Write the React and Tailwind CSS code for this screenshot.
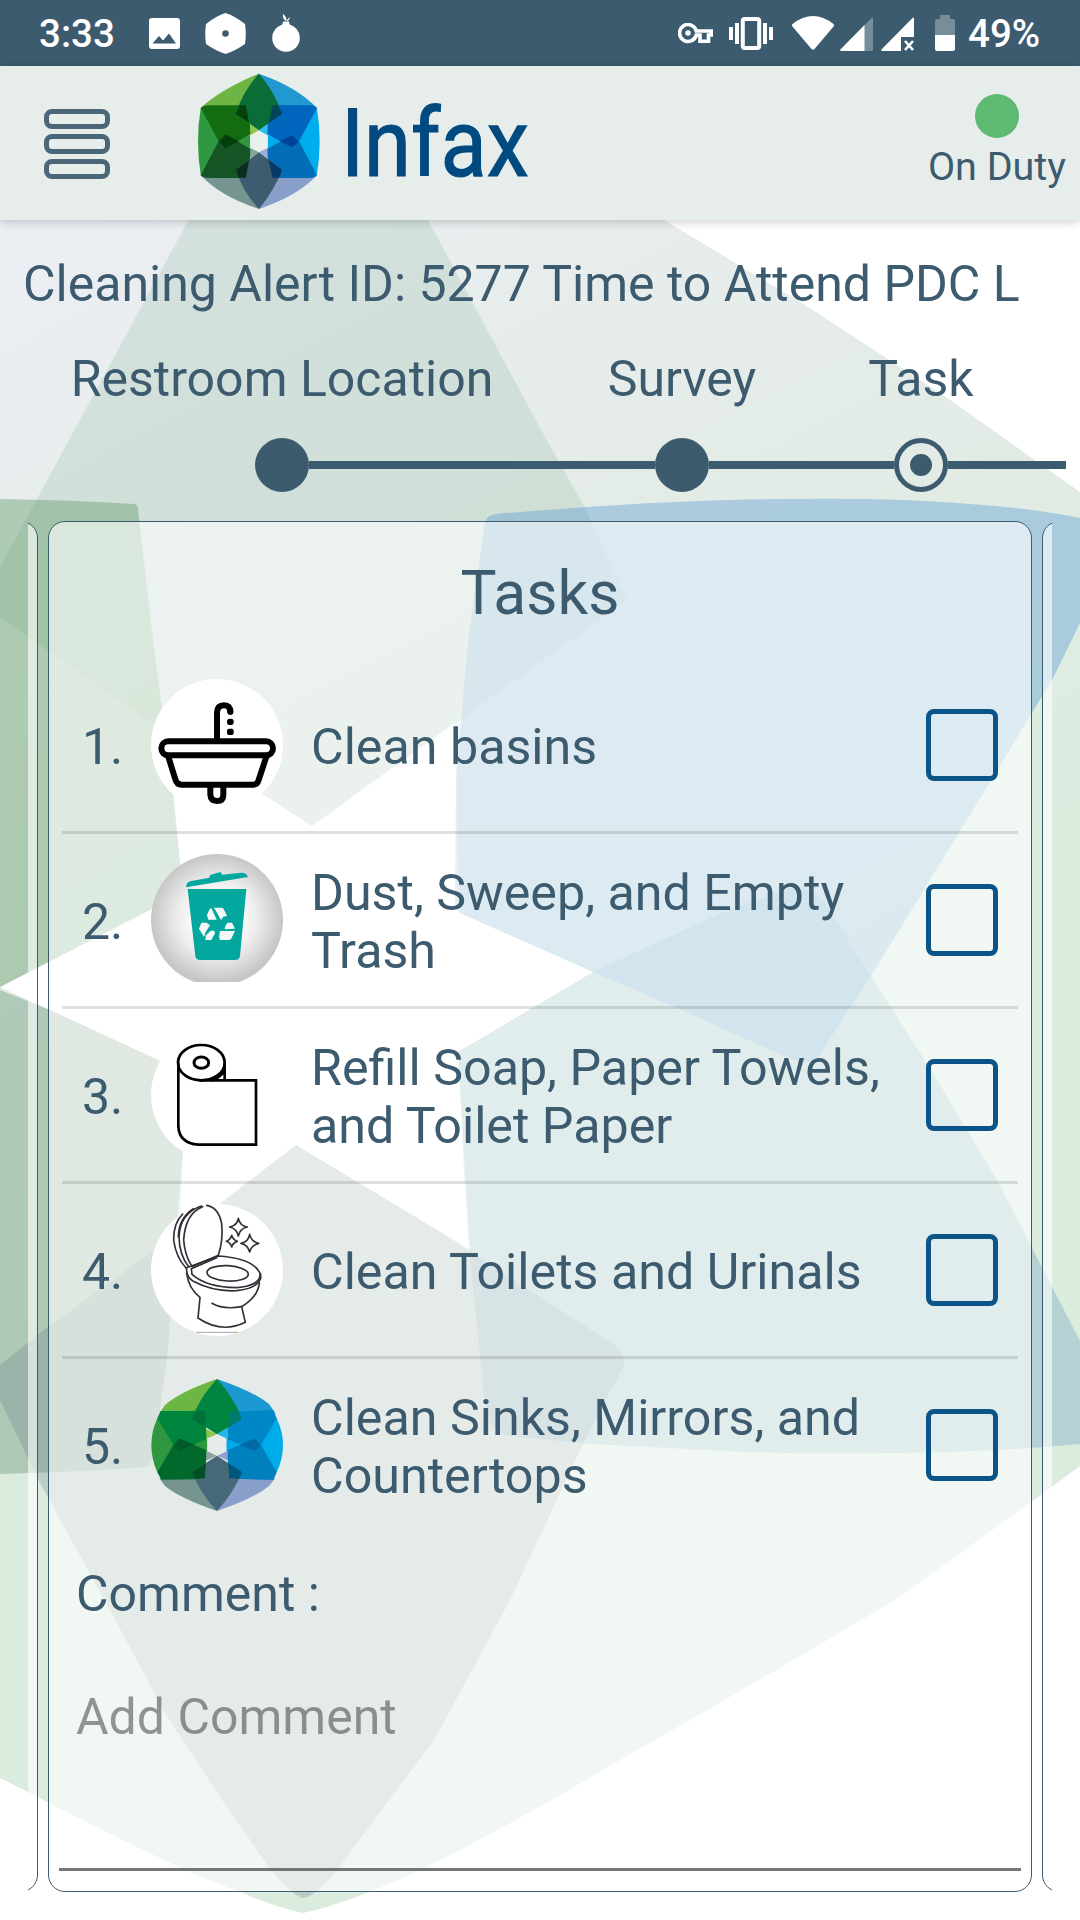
const tasks = [
  { label: ['Clean basins'], Icon: BasinIcon },
  { label: ['Dust, Sweep, and Empty', 'Trash'], Icon: TrashIcon },
  { label: ['Refill Soap, Paper Towels,', 'and Toilet Paper'], Icon: RollIcon },
  { label: ['Clean Toilets and Urinals'], Icon: ToiletIcon },
  { label: ['Clean Sinks, Mirrors, and', 'Countertops'], Icon: HexIcon },
];

function Backdrop() {
  return (
    <svg className="absolute inset-0 -z-10 h-[1920px] w-[1080px]" viewBox="0 0 1080 1920" aria-hidden="true">
      <defs>
        <linearGradient id="haze" gradientUnits="userSpaceOnUse" x1="100" y1="220" x2="560" y2="1100">
          <stop offset="0" stopColor="#ebeef3" />
          <stop offset="0.2" stopColor="#e8edee" />
          <stop offset="0.6" stopColor="#e2ebe5" />
          <stop offset="1" stopColor="#dbecdf" />
        </linearGradient>
      </defs>
      <rect width="1080" height="1920" fill="#fff" />
      <path
        fill="url(#haze)"
        d="M0 210H646L664 220L802 303L946 397L1080 492V1466Q1000 1525 895 1600Q740 1692 620 1760Q520 1820 427 1867Q350 1903 303 1913Q270 1906 241 1892Q200 1878 179 1867Q90 1825 28 1792L0 1778Z"
      />
      <path fill="#fff" d="M0 987L183 893L168 733L312 826L455 722L460 913L593 972L458 1052L470 1249L296 1145L180 1236L185 1072Z" />
      <path fill="#589773" fillOpacity="0.15" d="M194 210H422L428 220L540 428L585 508L627 600L312 826L152 723L0 617V567Z" />
      <path fill="#5a985f" fillOpacity="0.4" d="M0 499Q70 500 134 504Q137 504 138 509L153 640L173 793L183 893L0 987Z" />
      <path fill="#699676" fillOpacity="0.4" d="M0 990L50 1010L158 1060L183 1072L183 1153L178 1210L168 1350L158 1425Q155 1462 147 1467Q80 1472 0 1474Z" />
      <path fill="#69a2bb" fillOpacity="0.34" d="M458 1052L593 972L726 911L790 888Q812 884 828 908L871 976L933 1073L997 1180L1080 1341V1444Q980 1453 889 1453Q820 1454 746 1452L591 1444L510 1436Q493 1434 490 1420L485 1403L469 1248L464 1170Z" />
      <path fill="#5597d2" fillOpacity="0.39" d="M496 514Q640 502 730 500Q880 496 970 504Q1030 508 1080 518V623L1052 680L998 769L871 976L820 1054Q812 1066 797 1061L779 1054L675 1007L593 972L460 913Q455 910 455 900L456 780L468 640L485 522Q487 515 496 514Z" />
      <path fill="#697f8c" fillOpacity="0.28" d="M0 1365L40 1333L150 1253L220 1203L296 1145L440 1232L534 1293L610 1342Q627 1352 624 1366Q600 1410 580 1450L510 1600L434 1740L337 1870Q314 1898 303 1898Q292 1896 269 1867L220 1797L165 1713L110 1610L40 1483L0 1400Z" />
    </svg>
  );
}

function BasinIcon() {
  return (
    <svg className="size-[132px]" viewBox="333 57 396 396" fill="none" stroke="#000" strokeWidth="18">
      <circle cx="531" cy="255" r="198" fill="#fff" stroke="none" />
      <rect x="364" y="244" width="335" height="42" rx="21" />
      <path d="M385 290L406 358Q410 374 425 374H640Q652 374 656 360L679 290" />
      <path d="M531 240V158Q532 136 552 136Q571 136 571 158" />
      <path d="M571 150V156" strokeLinecap="round" />
      <path d="M511 380V404Q512 423 531 423Q550 423 550 404V380" />
      <rect x="561" y="176" width="20" height="19" rx="8" fill="#000" stroke="none" />
      <rect x="561" y="206" width="20" height="19" rx="6" fill="#000" stroke="none" />
    </svg>
  );
}

function TrashIcon() {
  return (
    <svg className="size-[132px]" viewBox="333 582 396 396">
      <defs>
        <radialGradient id="disc">
          <stop offset="0.3" stopColor="#fff" />
          <stop offset="0.6" stopColor="#ededed" />
          <stop offset="1" stopColor="#c6c6c6" />
        </radialGradient>
      </defs>
      <path d="M463 966A198 198 0 1 1 599 966Z" fill="url(#disc)" />
      <g fill="#04a79d">
        <path d="M443 687H619L600 888Q598 900 586 900H480Q468 900 466 888Z" />
        <path d="M438 682Q438 666 454 663L508 653L510 645L542 636L546 644L604 638Q620 638 624 651Z" />
      </g>
      <g fill="#f4f8f6">
        <path d="M514 744L530 779H505L501 765L509 747Z" />
        <path d="M521 743H548L554 753L561 768L550 770L543 780L526 749Z" />
        <path d="M484 788H500L510 796L497 816L492 831L477 806Z" />
        <path d="M512 812H523L525 820L514 840H496L498 826Z" />
        <path d="M562 788H576L585 806L554 808L555 800Z" />
        <path d="M540 813H585L573 838L566 840H540L537 830Z" />
      </g>
    </svg>
  );
}

function RollIcon() {
  return (
    <svg className="size-[132px]" viewBox="333 57 396 396" fill="none" stroke="#000" strokeWidth="8">
      <circle cx="531" cy="255" r="198" fill="#fff" stroke="none" />
      <ellipse cx="484" cy="158" rx="70" ry="53" />
      <ellipse cx="484" cy="158" rx="22" ry="17" strokeWidth="9" />
      <path d="M415 158V350Q418 400 475 404H648V211H478" />
      <path d="M554 158V211M554 180Q540 206 510 211" />
    </svg>
  );
}

function ToiletIcon() {
  return (
    <svg className="size-[132px]" viewBox="333 582 396 396" fill="none" stroke="#322f38" strokeWidth="5" strokeLinecap="round" strokeLinejoin="round">
      <circle cx="531" cy="780" r="198" fill="#fff" stroke="none" />
      <path d="M500 586Q535 592 545 640Q550 690 535 736L456 770Q434 735 431 690Q436 610 488 590" />
      <path d="M484 588Q420 610 417 680Q418 735 446 770" />
      <path d="M460 596Q416 625 415 680" />
      <path d="M428 612Q400 640 401 690Q407 740 438 774" />
      <path d="M438 774L535 738Q640 745 660 790Q664 826 590 833Q500 832 456 793L454 776L530 743" />
      <path d="M440 778Q438 800 460 814Q520 846 590 842Q650 836 662 805V792" />
      <ellipse cx="563" cy="790" rx="62" ry="23" transform="rotate(3 563 790)" />
      <path d="M440 790Q446 836 480 862L474 924Q545 972 616 937L605 890Q655 860 658 818" />
      <path d="M516 880Q550 900 605 890" />
      <path d="M595 625Q600 648 622 651Q600 656 595 678Q590 656 569 651Q592 646 595 625Z" />
      <path d="M629 673Q634 695 656 700Q634 706 629 726Q624 705 603 700Q625 696 629 673Z" />
      <path d="M575 676Q579 690 592 694Q579 698 575 711Q571 698 559 694Q571 690 575 676Z" />
      <path d="M470 967H586" stroke="#aaa6ab" strokeWidth="3" />
      <path d="M587 967H593" stroke="#b7bd3c" strokeWidth="3" />
    </svg>
  );
}

function HexIcon() {
  return (
    <svg className="size-[132px]" viewBox="333 87 396 396">
      <path fill="#6cb644" d="M531 87Q420 125 375 165L358 190H520Z" />
      <path fill="#1b99d0" d="M531 87Q642 125 687 162L706 190H542Z" />
      <path fill="#769490" d="M531 483Q420 445 375 408L358 385H520Z" />
      <path fill="#889fca" d="M531 483Q642 445 687 408L706 385H542Z" />
      <path fill="#2f973f" d="M352 205Q316 285 352 367L440 345L502 303V266L440 225Z" />
      <path fill="#00abea" d="M710 205Q748 285 710 367L622 345L559 303V266L622 225Z" />
      <path fill="#8bc549" d="M497 236L531 253L497 268Z" />
      <path fill="#25b7ee" d="M565 232L531 253L562 266Z" />
      <path fill="#8aa49c" d="M499 302L531 317L497 332Z" />
      <path fill="#8fa1d4" d="M563 302L531 317L565 332Z" />
      <path fill="#00853f" d="M352 205L362 183Q430 183 494 182Q499 230 499 268L417 303L400 285Z" />
      <path fill="#0087c6" d="M710 205L700 180Q630 183 568 186Q562 230 563 268L645 303L663 285Z" />
      <path fill="#006a2d" d="M352 367L364 389Q430 389 494 387Q499 345 499 301L417 265L400 285Z" />
      <path fill="#0080bd" d="M710 367L700 390Q630 389 568 384Q562 345 563 301L645 265L663 285Z" />
      <path fill="#005a2b" d="M417 265L463 284L417 303L402 288Z" />
      <path fill="#006aa5" d="M645 265L600 284L645 303L661 287Z" />
      <path fill="#008540" d="M531 87Q580 140 606 206L531 253L456 206Q480 140 531 87Z" />
      <path fill="#476879" d="M531 483Q580 430 606 366L531 317L456 366Q480 430 531 483Z" />
      <path fill="#006f3b" d="M467 182L494 184L497 232L456 206Z" />
      <path fill="#007a6d" d="M595 182L568 186L565 232L606 206Z" />
      <path fill="#004f24" d="M464 387L494 385L498 340L456 366Z" />
      <path fill="#00567d" d="M598 387L568 384L564 340L606 366Z" />
      <path fill="#e6ebec" d="M531 253L559 266V303L531 317L502 303V266Z" />
    </svg>
  );
}

function BrandMark() {
  return (
    <svg className="h-[136px] w-[122px]" viewBox="575 220 355 408" preserveAspectRatio="none">
      <path fill="#6db645" d="M752 222Q640 270 583 325L600 335H725Z" />
      <path fill="#2199d0" d="M752 222Q864 262 921 325L905 335H780Z" />
      <path fill="#769490" d="M752 628Q640 590 583 527L600 520H725Z" />
      <path fill="#889fca" d="M752 628Q864 590 921 527L905 520H780Z" />
      <path fill="#2f9941" d="M583 325Q567 425 583 527L660 490L727 444V408L660 365Z" />
      <path fill="#00adec" d="M921 325Q937 425 921 527L845 490L778 444V408L845 365Z" />
      <path fill="#8cc84b" d="M722 370L752 392L724 409Z" />
      <path fill="#2cbcf2" d="M782 370L752 392L780 409Z" />
      <path fill="#83a397" d="M724 443L752 458L722 480Z" />
      <path fill="#a0ace0" d="M780 443L752 458L782 480Z" />
      <path fill="#136c10" d="M583 325Q590 317 605 317H714Q727 350 727 404L655 446L635 425Z" />
      <path fill="#0065bd" d="M921 325Q915 317 900 317H790Q777 350 777 404L850 444L869 425Z" />
      <path fill="#155424" d="M583 527Q590 535 605 535H714Q727 500 727 447L655 404L635 425Z" />
      <path fill="#006db6" d="M921 527Q915 535 900 535H790Q777 500 777 447L850 406L869 425Z" />
      <path fill="#05400a" d="M655 404L694 425L655 446L637 427Z" />
      <path fill="#00419a" d="M850 407L812 425L850 443L867 426Z" />
      <path fill="#0a6d38" d="M752 222Q795 270 820 342L752 392L685 342Q705 275 752 222Z" />
      <path fill="#3e5b70" d="M752 628Q795 575 820 510L752 458L685 510Q705 575 752 628Z" />
      <path fill="#04400c" d="M696 317H714L723 368L685 342Z" />
      <path fill="#03465c" d="M808 317H792L781 370L820 342Z" />
      <path fill="#09301c" d="M693 534H714L724 481L685 510Z" />
      <path fill="#073a68" d="M811 534H792L780 481L820 510Z" />
      <path fill="#e9f0ee" d="M752 393L778 408V444L752 457L727 444V408Z" />
    </svg>
  );
}

function StatusBar() {
  return (
    <div className="flex h-[66px] items-center bg-[#3d5b6f] text-[38.5px] leading-[45px] font-medium text-white">
      <span className="ml-[39px] w-[110px] pt-px">3:33</span>
      <svg className="h-[31px] w-[31px]" viewBox="0 0 31 31">
        <rect width="31" height="31" rx="3" fill="#fff" />
        <path d="M3.500 25.500L10 18L14 22.500L20 15.500L27 25.500Z" fill="#3d5b6f" />
      </svg>
      <svg className="ml-[25px] h-[41px] w-[41px]" viewBox="0 0 41 41">
        <path d="M20.500 0Q30 3 40 11Q41.500 20 40 31Q30 38 20.500 41Q11 38 1 31Q-0.500 20 1 11Q11 3 20.500 0Z" fill="#fff" />
        <circle cx="20.500" cy="20.500" r="3.300" fill="#3d5b6f" />
      </svg>
      <svg className="ml-[26px] h-[38px] w-[28px]" viewBox="0 0 28 38" fill="#fff">
        <ellipse cx="14" cy="24" rx="13.800" ry="13.800" />
        <path d="M9 12Q11 10 11 7.500H17Q17 10 19 12Z" />
        <path d="M11 0Q15 3 14.500 7L12.500 6Q10 3 11 0ZM18 3Q17 7 14.500 7.500Q15 5 18 3Z" />
      </svg>
      <svg className="ml-[378px] h-[21px] w-[35px]" viewBox="0 0 35 21" fill="none" stroke="#fff" strokeWidth="3.600">
        <path d="M18.300 8.500A8.500 8.500 0 1 0 18.300 12.500H22V18.800H30.500V12.500H33.200V8.500Z" transform="translate(0 -0.500)" />
        <circle cx="10" cy="10" r="2.800" fill="#fff" stroke="none" />
      </svg>
      <svg className="ml-[16px] h-[33px] w-[44px]" viewBox="0 0 44 33" fill="#fff">
        <path d="M0 10H4V23H0ZM6 6H10V27H6ZM34 6H38V27H34ZM40 10H44V23H40Z" />
        <rect x="13.800" y="2" width="16.400" height="29" rx="2" fill="none" stroke="#fff" strokeWidth="4" />
      </svg>
      <svg className="ml-[19px] h-[34px] w-[42px]" viewBox="0 0 42 34">
        <path d="M0.500 8Q21 -8 41.500 8Q42.500 9 41.500 10.500L22.500 33Q21 34.500 19.500 33L0.500 10.500Q-0.500 9 0.500 8Z" fill="#fff" />
      </svg>
      <svg className="mt-[2px] ml-[6px] h-[34px] w-[33px]" viewBox="0 0 33 34">
        <path d="M0 33L32 0.500L33 1V33L32 34H1Z" fill="#788d9a" />
        <path d="M0 33L24.500 8V34H1Z" fill="#fff" />
      </svg>
      <svg className="mt-[2px] ml-[8px] h-[34px] w-[33px]" viewBox="0 0 33 34" fill="#fff">
        <path d="M0 33L32 0.500L33 1V20H20V34H1Z" />
        <path d="M24 24L32 33M32 24L24 33" stroke="#fff" strokeWidth="2.600" />
      </svg>
      <svg className="ml-[21px] h-[36px] w-[20px]" viewBox="0 0 20 36">
        <path d="M5 0H15V4H18Q20 4 20 6V20H0V6Q0 4 2 4H5Z" fill="#788d9a" />
        <path d="M0 20H20V34Q20 36 18 36H2Q0 36 0 34Z" fill="#fff" />
      </svg>
      <span className="ml-[13px] pt-px">49%</span>
    </div>
  );
}

function AppBar() {
  return (
    <header className="flex h-[154px] items-start bg-[#e6edea] shadow-[0_2px_9px_rgba(0,0,0,0.2)]">
      <button className="mt-[43px] ml-[44px] flex w-[66px] flex-col gap-[5px]" aria-label="Menu">
        <span className="h-[20px] rounded-[8px] border-[5px] border-[#4a677a]" />
        <span className="h-[20px] rounded-[8px] border-[5px] border-[#4a677a]" />
        <span className="h-[20px] rounded-[8px] border-[5px] border-[#4a677a]" />
      </button>
      <div className="mt-[7px] ml-[88px] flex">
        <BrandMark />
        <svg className="ml-[22px] h-[136px] w-[220px]" viewBox="0 0 220 136">
          <text
            x="-1"
            y="103"
            textLength="188"
            lengthAdjust="spacingAndGlyphs"
            fill="#014a80"
            stroke="#014a80"
            strokeWidth="1.2"
            className="font-['Roboto'] text-[95px] font-normal"
          >
            Infax
          </text>
        </svg>
      </div>
      <div className="mt-[28px] mr-[14px] ml-auto flex flex-col items-center gap-[6px]">
        <span className="size-[44px] rounded-full bg-[#5eba70]" />
        <span className="text-[39.5px] leading-[45px]">On Duty</span>
      </div>
    </header>
  );
}

function Stepper() {
  return (
    <nav className="mt-[37px]">
      <div className="ml-[22px] grid grid-cols-[520px_280px_198px] text-center">
        <span>Restroom Location</span>
        <span>Survey</span>
        <span>Task</span>
      </div>
      <div className="mt-[30px] ml-[255px] flex items-center">
        <span className="size-[54px] rounded-full bg-[#3d5b6f]" />
        <span className="h-[8px] w-[346px] bg-[#3d5b6f]" />
        <span className="size-[54px] rounded-full bg-[#3d5b6f]" />
        <span className="h-[8px] w-[185px] bg-[#3d5b6f]" />
        <span className="flex size-[54px] items-center justify-center rounded-full border-[5px] border-[#3d5b6f]">
          <span className="size-[22px] rounded-full bg-[#3d5b6f]" />
        </span>
        <span className="h-[8px] w-[118px] bg-[#3d5b6f]" />
      </div>
    </nav>
  );
}

function TaskRow({ index, label, Icon, last }) {
  return (
    <li className={last ? 'flex h-[172px] items-center' : 'flex h-[175px] items-center border-b-[3px] border-black/12'}>
      <span className="ml-[20px] w-[69px] pt-[4px]">{index}.</span>
      <Icon />
      <span className="ml-[28px] flex-1 pt-[4px] text-[50.2px] whitespace-nowrap">
        {label.map((line) => (
          <span key={line} className="block">{line}</span>
        ))}
      </span>
      <span className="mr-[20px] size-[72px] rounded-[8px] border-[5px] border-[#0b5488]" />
    </li>
  );
}

export default function App() {
  return (
    <div className="relative isolate h-[1920px] w-[1080px] overflow-hidden font-['Roboto',sans-serif] text-[50px] leading-[58px] text-[#3d5b6f]">
      <Backdrop />
      <StatusBar />
      <AppBar />
      <h1 className="mt-[35px] ml-[23px] whitespace-nowrap">Cleaning Alert ID: 5277 Time to Attend PDC L</h1>
      <Stepper />
      <main className="mt-[29px] flex h-[1371px] gap-[10px] pl-[28px]">
        <div className="flex w-[10px] justify-end overflow-hidden">
          <div className="w-[100px] shrink-0 rounded-[17px] border border-[#3d5b6f] bg-white/60" />
        </div>
        <section className="flex w-[984px] flex-col rounded-[17px] border border-[#3d5b6f] bg-white/60">
          <h2 className="mt-[36px] text-center text-[60.5px] leading-[71px]">Tasks</h2>
          <ol className="mx-[13px] mt-[30px]">
            {tasks.map((task, i) => (
              <TaskRow key={i} index={i + 1} last={i === tasks.length - 1} {...task} />
            ))}
          </ol>
          <label className="mt-[34px] ml-[27px]">Comment :</label>
          <div className="mx-[10px] mt-[65px] h-[183px] border-b-[3px] border-[#757575] pl-[17px] text-black/40">Add Comment</div>
        </section>
        <div className="flex w-[10px] overflow-hidden">
          <div className="w-[100px] shrink-0 rounded-[17px] border border-[#3d5b6f] bg-white/60" />
        </div>
      </main>
    </div>
  );
}
